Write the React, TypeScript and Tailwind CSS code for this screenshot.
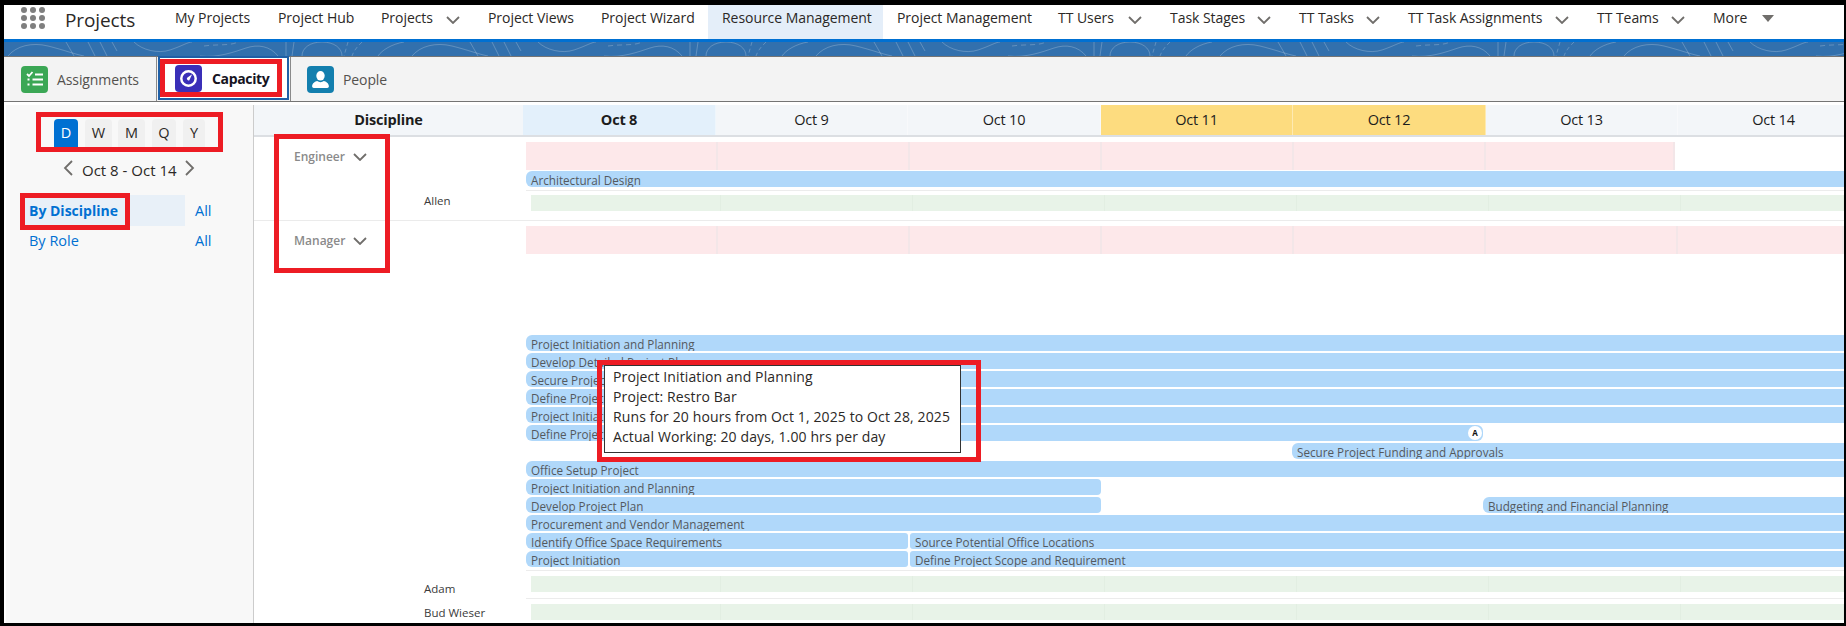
import React from 'react';

const FONT = "font-['Open_Sans','Noto_Sans',sans-serif]";

const navItems = [
  { label: 'My Projects', w: 'w-[103px]' },
  { label: 'Project Hub', w: 'w-[103px]' },
  { label: 'Projects', w: 'w-[107px]', caret: true },
  { label: 'Project Views', w: 'w-[113px]' },
  { label: 'Project Wizard', w: 'w-[121px]' },
  { label: 'Resource Management', w: 'w-[175px]', active: true },
  { label: 'Project Management', w: 'w-[161px]' },
  { label: 'TT Users', w: 'w-[112px]', caret: true },
  { label: 'Task Stages', w: 'w-[129px]', caret: true },
  { label: 'TT Tasks', w: 'w-[109px]', caret: true },
  { label: 'TT Task Assignments', w: 'w-[189px]', caret: true },
  { label: 'TT Teams', w: 'w-[116px]', caret: true },
];

const days = [
  { label: 'Oct 8', w: 'w-[193px]', bg: 'bg-[#e3f0fb]', bold: true },
  { label: 'Oct 9', w: 'w-[192px]', bg: 'bg-[#f3f6f9]' },
  { label: 'Oct 10', w: 'w-[193px]', bg: 'bg-[#f3f6f9]' },
  { label: 'Oct 11', w: 'w-[192px]', bg: 'bg-[#fddc7f]' },
  { label: 'Oct 12', w: 'w-[193px]', bg: 'bg-[#fddc7f]' },
  { label: 'Oct 13', w: 'w-[192px]', bg: 'bg-[#f3f6f9]' },
  { label: 'Oct 14', w: 'w-[192px]', bg: 'bg-[#f3f6f9]' },
];

function Chevron({ className = '' }: { className?: string }) {
  return (
    <svg viewBox="0 0 14 8" className={className} fill="none" stroke="#706e6b" strokeWidth="1.8">
      <path d="M1 1l6 6 6-6" />
    </svg>
  );
}

function Banner() {
  return (
    <svg className="block w-full h-[14px]" height="14">
      <defs>
        <pattern id="contour" width="404" height="14" patternUnits="userSpaceOnUse">
          <g fill="none" stroke="#ffffff" strokeOpacity="0.22" strokeWidth="1">
            <path d="M4 14C12 4 28 0 44 4s26 8 36 10" />
            <path d="M62 0l8 14M84 0l7 14M96 0l7 14M108 0l5 9" />
            <path d="M130 0c8 8 24 12 36 8s18-8 22-8" />
            <path d="M200 4c14-2 26 0 34-4" strokeDasharray="5 4" />
            <path d="M196 14c18 2 34-4 46-8s24-2 32 8" />
            <path d="M282 0v14M290 0l-2 14" />
            <path d="M298 14c0-8 8-14 20-14s20 6 20 14" />
            <path d="M344 0l-4 14M358 0c-4 4-8 8-10 14" strokeDasharray="4 3" />
            <path d="M374 14c4-6 14-12 26-14" />
          </g>
        </pattern>
      </defs>
      <rect width="100%" height="14" fill="url(#contour)" />
    </svg>
  );
}

function TaskIcon() {
  return (
    <div className="w-[27px] h-[27px] rounded-[4px] bg-[#3ba755] flex items-center justify-center">
      <svg viewBox="0 0 20 20" className="w-[20px] h-[20px]" fill="none" stroke="#fff" strokeWidth="1.8">
        <path d="M2 5l2 2 3.500-4" />
        <path d="M10 5.500h8M7.500 10.500h10.500M7.500 15.500h10.500" />
        <path d="M2.500 10.500h2M2.500 15.500h2" />
      </svg>
    </div>
  );
}

function GaugeIcon() {
  return (
    <div className="w-[27px] h-[27px] rounded-[4px] bg-[#3a2fb8] flex items-center justify-center">
      <svg viewBox="0 0 20 20" className="w-[19px] h-[19px]">
        <circle cx="10" cy="10" r="7.600" fill="none" stroke="#fff" strokeWidth="2.600" />
        <path d="M13.800 5.500L8.600 9.200a1.800 1.800 0 0 0 2.300 2.600z" fill="#fff" />
      </svg>
    </div>
  );
}

function PersonIcon() {
  return (
    <div className="w-[27px] h-[27px] rounded-[4px] bg-[#137fae] flex items-center justify-center">
      <svg viewBox="0 0 20 20" className="w-[21px] h-[21px]" fill="#fff">
        <ellipse cx="10" cy="6.500" rx="4" ry="4.500" />
        <path d="M2 16.500c0-3 3-4.500 4.800-5 1.800 1.400 4.600 1.400 6.400 0 1.800.5 4.800 2 4.800 5 0 1-.8 1.500-1.500 1.500h-13c-.7 0-1.500-.5-1.500-1.500z" />
      </svg>
    </div>
  );
}

function TopNav() {
  return (
    <div className="h-[34px] flex items-stretch bg-white text-[#2b2826]">
      <div className="w-[17px]" />
      <div className="w-[24px] h-[22px] mt-[2px] grid grid-cols-3 gap-x-[3px] gap-y-[2px]">
        {Array.from({ length: 9 }).map((_, i) => (
          <span key={i} className="w-[6px] h-[6px] rounded-full bg-[#7f7f7f]" />
        ))}
      </div>
      <div className="w-[20px]" />
      <div className="w-[96px] text-[19px] leading-[30px] tracking-[-0.1px]">Projects</div>
      {navItems.map((item) => (
        <div
          key={item.label}
          className={`${item.w} pl-[14px] flex items-start pt-[3px] text-[14px] leading-[20px] tracking-[-0.05px] whitespace-nowrap ${item.active ? 'bg-[#e4eef9]' : ''}`}
        >
          <span>{item.label}</span>
          {item.caret && <Chevron className="ml-auto mr-[14px] mt-[8px] w-[14px] h-[8px]" />}
        </div>
      ))}
      <div className="pl-[14px] pt-[3px] flex items-start text-[14px] leading-[20px] tracking-[-0.05px]">
        <span>More</span>
        <svg viewBox="0 0 12 7" className="ml-[15px] mt-[7px] w-[12px] h-[7px]" fill="#706e6b">
          <path d="M0 0h12l-6 7z" />
        </svg>
      </div>
    </div>
  );
}

function TabBar() {
  return (
    <div className="h-[46px] flex bg-[#f3f3f3] border-t border-b border-[#747474] text-[14px]">
      <div className="w-[153px] flex items-center pl-[17px] gap-[9px] text-[#54514e] tracking-[-0.1px] border-r border-[#8a8a8a]">
        <TaskIcon />
        <span>Assignments</span>
      </div>
      <div className="w-[131px] ml-[1px] -mt-px mb-[1px] flex items-center pl-[15px] gap-[10px] bg-white border-2 border-[#1f5fa6] font-bold text-[#16141f] tracking-[-0.35px]">
        <GaugeIcon />
        <span>Capacity</span>
      </div>
      <div className="flex-1 flex items-center pl-[16px] gap-[9px] text-[#54514e] tracking-[-0.1px] border-l border-[#8a8a8a] ml-[1px]">
        <PersonIcon />
        <span>People</span>
      </div>
    </div>
  );
}

function Sidebar() {
  const scales = [
    { l: 'D', w: 'w-[24px]', m: 'ml-0', on: true },
    { l: 'W', w: 'w-[27px]', m: 'ml-[7px]' },
    { l: 'M', w: 'w-[27px]', m: 'ml-[6px]' },
    { l: 'Q', w: 'w-[24px]', m: 'ml-[7px]' },
    { l: 'Y', w: 'w-[22px]', m: 'ml-[7px]' },
  ];
  return (
    <div className="w-[248px] ml-[2px] shrink-0 bg-[#f8f8f8] border-r border-[#cccccc] text-[14.500px]">
      <div className="flex pl-[48px] pt-[14px]">
        {scales.map((s) => (
          <div
            key={s.l}
            className={`${s.w} ${s.m} h-[28px] rounded-t-[4px] flex items-center justify-center ${s.on ? 'bg-[#0070d2] text-white' : 'bg-[#f0f0f0] text-[#2b2826]'}`}
          >
            {s.l}
          </div>
        ))}
      </div>
      <div className="flex items-center pl-[57px] mt-[13px] h-[16px] text-[#2b2826]">
        <svg viewBox="0 0 10 16" className="w-[10px] h-[16px]" fill="none" stroke="#706e6b" strokeWidth="1.8">
          <path d="M9 1L2 8l7 7" />
        </svg>
        <span className="ml-[9px] mt-[4px] w-[95px] text-[15px] whitespace-nowrap">Oct 8 - Oct 14</span>
        <svg viewBox="0 0 10 16" className="ml-[8px] w-[10px] h-[16px]" fill="none" stroke="#706e6b" strokeWidth="1.8">
          <path d="M1 1l7 7-7 7" />
        </svg>
      </div>
      <div className="mt-[19px] ml-[15px] w-[164px] h-[31px] bg-[#e8f0f8] flex items-center pl-[8px] text-[14px] text-[#0070d2] font-bold">
        By Discipline
      </div>
      <div className="flex -mt-[31px] h-[31px] items-center pl-[189px] text-[#0070d2]">All</div>
      <div className="flex h-[29px] items-center pl-[23px] text-[#0070d2]">
        <span className="w-[166px]">By Role</span>
        <span>All</span>
      </div>
    </div>
  );
}

function HeaderRow() {
  return (
    <div className="h-[32px] flex overflow-hidden border-b-2 border-[#dcdfe3] text-[14.500px] text-[#1c1c1c] tracking-[-0.2px]">
      <div className="w-[269px] shrink-0 flex items-center justify-center bg-[#f3f6f9] font-bold">Discipline</div>
      {days.map((d) => (
        <div key={d.label} className={`${d.w} ${d.bg} shrink-0 flex items-center justify-center ${d.bold ? 'font-bold' : ''} border-r border-[#ffffff66]`}>
          {d.label}
        </div>
      ))}
    </div>
  );
}

function PinkCells({ count }: { count: number }) {
  return (
    <div className="flex h-full bg-[#fde8ea]">
      {Array.from({ length: count }).map((_, i) => (
        <div key={i} className={`${i === count - 1 ? 'flex-1' : 'w-[192px]'} h-full border-r-2 border-[#f3e6e8]`} />
      ))}
    </div>
  );
}

function GreenCells() {
  return (
    <div className="flex h-[16px] bg-[#e8f3e8]">
      {Array.from({ length: 7 }).map((_, i) => (
        <div key={i} className={`${i === 0 ? 'w-[190px]' : i === 6 ? 'flex-1' : 'w-[192px]'} h-full border-r border-[#e2eee2]`} />
      ))}
    </div>
  );
}

type BarProps = { label?: string; w?: string; ml?: string; rounded?: string; children?: React.ReactNode };

function Bar({ label, w = 'flex-1', ml = '', rounded = 'rounded-l-[6px]', children }: BarProps) {
  return (
    <div className={`${w} ${ml} h-[16px] bg-[#b0d8fa] ${rounded} pl-[5px] pt-[2px] flex items-center text-[11.700px] leading-[16px] text-[#54595e] whitespace-nowrap overflow-hidden relative`}>
      {label}
      {children}
    </div>
  );
}

function BarRow({ children }: { children: React.ReactNode }) {
  return <div className="flex h-[16px] mb-[2px]">{children}</div>;
}

function GroupLabel({ label }: { label: string }) {
  return (
    <div className="w-[144px] shrink-0 pl-[40px] h-[40px] flex items-center text-[12px] font-semibold text-[#8a8a8a]">
      <span className="w-[59px]">{label}</span>
      <Chevron className="w-[14px] h-[8px]" />
    </div>
  );
}

function Gantt() {
  return (
    <div className="flex-1 min-w-0 flex flex-col text-[11.500px] text-[#3a3a3a]">
      <HeaderRow />
      {/* Engineer */}
      <div className="h-[84px] flex border-b border-[#ebebeb]">
        <GroupLabel label="Engineer" />
        <div className="w-[128px] shrink-0 pl-[26px] pt-[55px]">Allen</div>
        <div className="flex-1 min-w-0 pt-[5px]">
          <div className="h-[28px] w-[1149px] mb-[1px]"><PinkCells count={6} /></div>
          <div className="flex h-[16px]"><Bar label="Architectural Design" /></div>
          <div className="border-b border-[#ececec] h-[4px]" />
          <div className="ml-[5px] mt-[4px]"><GreenCells /></div>
        </div>
      </div>
      {/* Manager */}
      <div className="flex flex-1 min-h-0">
        <GroupLabel label="Manager" />
        <div className="w-[128px] shrink-0 pl-[26px] pt-[360px]">
          <div className="h-[16px] flex items-center">Adam</div>
          <div className="mt-[8px] h-[16px] flex items-center">Bud Wieser</div>
        </div>
        <div className="flex-1 min-w-0 pt-[5px]">
          <div className="h-[28px] mb-[81px]"><PinkCells count={7} /></div>
          <BarRow><Bar label="Project Initiation and Planning" /></BarRow>
          <BarRow><Bar label="Develop Detailed Project Plan" /></BarRow>
          <BarRow><Bar label="Secure Project" /></BarRow>
          <BarRow><Bar label="Define Project" /></BarRow>
          <BarRow><Bar label="Project Initiation" /></BarRow>
          <BarRow>
            <Bar label="Define Project" w="w-[957px]" rounded="rounded-l-[6px] rounded-r-[6px]">
              <span className="absolute right-[1px] top-[1px] w-[14px] h-[14px] rounded-full bg-white text-[#111] text-[8px] font-bold flex items-center justify-center">A</span>
            </Bar>
          </BarRow>
          <BarRow><Bar label="Secure Project Funding and Approvals" ml="ml-[766px]" /></BarRow>
          <BarRow><Bar label="Office Setup Project" /></BarRow>
          <BarRow><Bar label="Project Initiation and Planning" w="w-[575px]" rounded="rounded-l-[6px] rounded-r-[4px]" /></BarRow>
          <BarRow>
            <Bar label="Develop Project Plan" w="w-[575px]" rounded="rounded-l-[6px] rounded-r-[4px]" />
            <Bar label="Budgeting and Financial Planning" ml="ml-[382px]" />
          </BarRow>
          <BarRow><Bar label="Procurement and Vendor Management" /></BarRow>
          <BarRow>
            <Bar label="Identify Office Space Requirements" w="w-[382px]" rounded="rounded-l-[6px] rounded-r-[3px]" />
            <Bar label="Source Potential Office Locations" ml="ml-[2px]" rounded="rounded-l-[3px]" />
          </BarRow>
          <BarRow>
            <Bar label="Project Initiation" w="w-[382px]" rounded="rounded-l-[6px] rounded-r-[3px]" />
            <Bar label="Define Project Scope and Requirement" ml="ml-[2px]" rounded="rounded-l-[3px]" />
          </BarRow>
          <div className="border-b border-[#ececec] h-[2px]" />
          <div className="ml-[5px] mt-[5px]"><GreenCells /></div>
          <div className="border-b border-[#ececec] h-[7px]" />
          <div className="ml-[5px] mt-[5px]"><GreenCells /></div>
        </div>
      </div>
    </div>
  );
}

// Red review marks and the hover tooltip sit on top of the page
function Overlays() {
  const marks = [
    'left-[156px] top-[54px] w-[122px] h-[38px]',
    'left-[32px] top-[107px] w-[187px] h-[40px]',
    'left-[16px] top-[188px] w-[110px] h-[37px]',
    'left-[270px] top-[129px] w-[116px] h-[139px]',
    'left-[593px] top-[355px] w-[384px] h-[102px]',
  ];
  return (
    <>
      <div className="absolute left-[600px] top-[360px] w-[357px] h-[88px] bg-white border border-[#333] pl-[8px] pt-[1px] text-[14px] leading-[20px] text-[#2b2826] tracking-[0.12px] whitespace-nowrap">
        <div>Project Initiation and Planning</div>
        <div>Project: Restro Bar</div>
        <div>Runs for 20 hours from Oct 1, 2025 to Oct 28, 2025</div>
        <div>Actual Working: 20 days, 1.00 hrs per day</div>
      </div>
      {marks.map((m) => (
        <div key={m} className={`absolute ${m} border-[5px] border-[#ed1c24]`} />
      ))}
    </>
  );
}

export default function App() {
  return (
    <div className={`w-[1846px] h-[626px] bg-black pt-[5px] pl-[4px] pr-[2px] pb-[3px] overflow-hidden ${FONT}`}>
      <div className="relative h-full bg-white flex flex-col overflow-hidden">
        <TopNav />
        <div className="h-[3px] bg-[#0070d2]" />
        <div className="h-[14px] bg-[#3270ad]"><Banner /></div>
        <TabBar />
        <div className="h-[3px]" />
        <div className="flex-1 min-h-0 flex">
          <Sidebar />
          <Gantt />
        </div>
        <Overlays />
      </div>
    </div>
  );
}
